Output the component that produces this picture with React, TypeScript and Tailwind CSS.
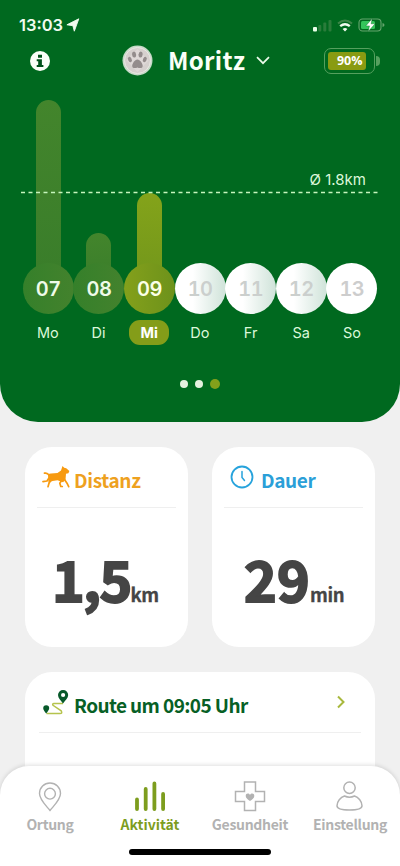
import React from "react";

const sans = "font-['Noto_Sans_CJK_SC','Noto_Sans',sans-serif]";

type Day = { num: string; name: string; bar: string; state: "past" | "today" | "next" | "last" };

const days: Day[] = [
  { num: "07", name: "Mo", bar: "h-[188px]", state: "past" },
  { num: "08", name: "Di", bar: "h-[55px]", state: "past" },
  { num: "09", name: "Mi", bar: "h-[95px]", state: "today" },
  { num: "10", name: "Do", bar: "h-0", state: "next" },
  { num: "11", name: "Fr", bar: "h-0", state: "next" },
  { num: "12", name: "Sa", bar: "h-0", state: "next" },
  { num: "13", name: "So", bar: "h-0", state: "last" },
];

const barTone = {
  past: "bg-linear-to-b from-[#43852c] to-[#397d2a]",
  today: "bg-linear-to-b from-[#84a31a] to-[#71961b]",
  next: "",
  last: "",
};

const circleTone = {
  past: "bg-linear-to-r from-[#35802a] to-[#43822d] text-[#effbe9]",
  today: "bg-linear-to-r from-[#84a01b] to-[#6d921b] text-[#fbffe6]",
  next: "bg-linear-to-r from-white from-35% to-[#cfe3d9] text-[#cbcfcd]",
  last: "bg-white text-[#cdcdcd]",
};

function StatusBar() {
  return (
    <div className="flex h-[45px] items-center pt-[5px] pl-[19px] pr-[14px] text-[#f1fbef]">
      <span className="text-[16.5px] font-semibold leading-5">13:03</span>
      <svg className="ml-[3px]" width="14" height="14" viewBox="0 0 14 14">
        <path d="M12.800.8.9 6.800l6 .9 1.400 5.500Z" fill="currentColor" stroke="currentColor" strokeWidth=".9" strokeLinejoin="round" />
      </svg>
      <svg className="ml-auto" width="20" height="14" viewBox="0 0 20 14">
        <rect x="0" y="9" width="4" height="4.500" rx="1" fill="#e9ffe9" />
        <rect x="5.300" y="7" width="3" height="6.500" rx="1" fill="#2a7c3b" />
        <rect x="10.300" y="4.500" width="3" height="9" rx="1" fill="#2a7c3b" />
        <rect x="15.500" y="2" width="3" height="11.500" rx="1" fill="#2a7c3b" />
      </svg>
      <svg className="ml-[4px]" width="16" height="13" viewBox="0 0 16 13" fill="none">
        <path d="M1 4.600Q8-1.700 15 4.600" stroke="#3d8649" strokeWidth="2" />
        <path d="M3.200 7.200q4.800-4 9.600 0" stroke="#f1fbef" strokeWidth="2.400" />
        <path d="m8 12.500-2.400-2.600q2.400-1.800 4.800 0Z" fill="#f1fbef" />
      </svg>
      <svg className="ml-[5px]" width="28" height="14" viewBox="0 0 28 14">
        <rect x="1" y="1" width="22" height="12" rx="3.500" fill="none" stroke="#65a56e" strokeWidth="1.100" />
        <rect x="3" y="3" width="14" height="8" rx="1.500" fill="#34c45b" />
        <path d="M24.500 5v4q2-.6 2-2t-2-2Z" fill="#65a56e" />
        <path d="M14.200.6 7.800 7.900h3.700L10.200 13.400l6.900-7.600h-4Z" fill="#fff" stroke="#00691f" strokeWidth=".4" />
      </svg>
    </div>
  );
}

function TitleBar() {
  return (
    <div className="flex h-[32px] items-center pl-[30px] pr-[20px]">
      <svg width="20" height="20" viewBox="0 0 20 20">
        <circle cx="10" cy="10" r="10" fill="#fbfff8" />
        <path d="M8 3.800h4v3H8ZM6.700 8.300h5.200v5.800h1.500v2H6.700v-2h1.500v-3.800H6.700Z" fill="#00511a" />
      </svg>
      <svg className="-mt-[2px] ml-[72px]" width="31" height="31" viewBox="0 0 31 31">
        <circle cx="15.500" cy="15.500" r="15" fill="#c6dac8" />
        <circle cx="15.500" cy="15.500" r="13" fill="#d6d0ce" stroke="#ece7e4" />
        <path d="m15.500 4 11 11.500-11 11.500-11-11.500Z" fill="#e4dddd" opacity=".6" />
        <g fill="#948c8c">
          <ellipse cx="12.100" cy="9.600" rx="2" ry="3" transform="rotate(-8 12.100 9.600)" />
          <ellipse cx="18.600" cy="9.600" rx="2" ry="3" transform="rotate(8 18.600 9.600)" />
          <ellipse cx="7.900" cy="14.500" rx="1.800" ry="2.700" transform="rotate(-25 7.900 14.500)" />
          <ellipse cx="22.800" cy="14.500" rx="1.800" ry="2.700" transform="rotate(25 22.800 14.500)" />
          <path d="M15.400 14.600c2.700 0 5.300 4.200 5.300 6.300 0 2.600-3.200 2.500-5.300 1.600-2 .9-5.200 1-5.200-1.600 0-2.100 2.500-6.300 5.200-6.300Z" />
        </g>
      </svg>
      <h1 className={`${sans} ml-[15px] -mt-[2px] w-[78px] whitespace-nowrap text-[24px] font-bold leading-8 tracking-[0.300px] text-[#fbfff8]`}>Moritz</h1>
      <svg className="-mt-[1px] ml-[10px]" width="14" height="10" viewBox="0 0 14 10" fill="none" stroke="#eafbe9" strokeWidth="1.700">
        <path d="m1 1.200 6 6 6-6" />
      </svg>
      <div className="ml-auto flex items-center">
        <div className="flex h-[26px] w-[51px] items-center rounded-[7px] border-[1.5px] border-[#55a05e] p-[3px]">
          <div className="flex h-[18px] w-[38px] items-center justify-end rounded-[3px] bg-[#899b12] pr-[3.5px] font-['Open_Sans'] text-[12.5px] font-bold leading-none text-white">90%</div>
        </div>
        <div className="ml-[1px] h-[10px] w-[4px] rounded-r-full bg-[#55a05e]" />
      </div>
    </div>
  );
}

function WeekChart() {
  return (
    <div className="relative mt-[23px] h-[250px] px-[22px]">
      <div className="flex h-[214px] items-end pl-[1px]">
        {days.map((d) => (
          <div key={d.num} className="flex w-[50.6px] flex-col items-center">
            <div className={`w-[25px] rounded-t-full ${d.bar} ${barTone[d.state]}`} />
            <div className={`${d.bar === "h-0" ? "" : "-mt-[25px]"} flex h-[51px] w-[51px] items-center justify-center rounded-full font-['Inter'] text-[20px] font-semibold tabular-nums tracking-[-0.5px] ${circleTone[d.state]}`}>{d.num}</div>
          </div>
        ))}
      </div>
      <div className="mt-[6px] flex pl-[0.5px]">
        {days.map((d) => (
          <div key={d.name} className="flex w-[50.7px] justify-center">
            <span className={`flex h-[25px] items-center rounded-[11px] text-[14.5px] ${d.state === "today" ? "w-[40px] justify-center bg-[#849d19] font-bold text-white" : "text-[#dcf8da]"}`}>{d.name}</span>
          </div>
        ))}
      </div>
      <svg className="absolute left-[21px] top-[91px]" width="357" height="3" viewBox="0 0 357 3">
        <path d="M0 1.500h357" stroke="#c5f5bd" strokeWidth="1.300" strokeDasharray="4 3.500" />
      </svg>
      <span className="absolute right-[34px] top-[70px] text-[15px] leading-5 text-[#dcf8da]">Ø 1.8km</span>
    </div>
  );
}

function DogIcon() {
  return (
    <svg width="28" height="23" viewBox="0 0 28 23" fill="none" stroke="#f79a10" strokeLinecap="round" strokeLinejoin="round">
      <path d="M6 9.800Q7 8.500 9 8.500L15.500 8 19 5.500 20.500 1l1.700 1.700 2 .5 3.200 2.800-1 2.200-2.400.6-.5 6-2.500 2.400-5.500-1.900-5 .7-4 1.800Z" fill="#f79a10" stroke="none" />
      <path d="M7 10.200Q5.500 7.500 2.500 8.200M6.800 13.200 5 16 1 16.700M9.500 14l-2.500 4.300-1 3.400M19.600 15.500l-1.800 2.700 1 3.300h1.500M22.500 14.500l2.500 3.700 1.700 3.500" strokeWidth="1.700" />
    </svg>
  );
}

function ClockIcon() {
  return (
    <svg width="24" height="24" viewBox="0 0 24 24" fill="none" stroke="#27a3dc" strokeLinecap="round">
      <circle cx="12" cy="12" r="10.500" strokeWidth="1.800" />
      <path d="M12 6.500v6l2.500 3" strokeWidth="1.500" />
    </svg>
  );
}

function StatCard(p: { icon: React.ReactNode; iconPad: string; title: string; tone: string; value: string; unit: string; valuePad: string; valueTrack: string }) {
  return (
    <section className="h-[200px] w-[163px] rounded-[27px] bg-white px-[12px]">
      <div className={`flex h-[61px] border-b border-[#efefef] ${p.iconPad}`}>
        <div className="pt-[18px]">{p.icon}</div>
        <h2 className={`${sans} pt-[19px] text-[19px] font-bold leading-7 tracking-[-0.35px] ${p.tone}`}>{p.title}</h2>
      </div>
      <div className={`${sans} flex items-baseline whitespace-nowrap pt-[33px] font-bold leading-[74px] text-[#454545] ${p.valuePad}`}>
        <span className={`text-[55.5px] [-webkit-text-stroke:2px_#454545] ${p.valueTrack}`}>{p.value}</span>
        <span className="text-[18.5px] tracking-[-0.3px] [-webkit-text-stroke:0.3px_#454545]">{p.unit}</span>
      </div>
    </section>
  );
}

function RouteCard() {
  return (
    <section className="mt-[25px] h-[194px] rounded-[27px] bg-white px-[14px]">
      <div className="flex h-[61px] border-b border-[#efefef] pl-[3px]">
        <svg className="mt-[17px]" width="28" height="27" viewBox="0 0 28 27">
          <path d="M21 14.500h-9q-2 .3-1 1.800l8.200 5.500q1.500 2.700-1.200 2.700H4.500" fill="none" stroke="#b5c34c" strokeWidth="1.500" />
          <path d="M21 14.500c-2.200-3-5-5.500-5-8.500a5 5 0 0 1 10.200 0c0 3-3 5.500-5.200 8.500Z" fill="#07592a" />
          <circle cx="21.100" cy="6" r="2.100" fill="#fff" />
          <path d="M4.200 24.500c-1.400-2-3-3.500-3-5.300a3 3 0 0 1 6 0c0 1.800-1.700 3.300-3 5.300Z" fill="#07592a" />
        </svg>
        <h2 className={`${sans} ml-[4px] pt-[19px] text-[19px] font-bold leading-7 tracking-[-0.6px] text-[#076025]`}>Route um 09:05 Uhr</h2>
        <svg className="ml-auto mr-[15px] mt-[23px]" width="10" height="14" viewBox="0 0 10 14" fill="none" stroke="#a8b83d" strokeWidth="2">
          <path d="m2 1.500 5.500 5.500L2 12.500" />
        </svg>
      </div>
    </section>
  );
}

function NavItem({ label, icon, active = false }: { label: string; icon: React.ReactNode; active?: boolean }) {
  return (
    <div className={`flex w-[100px] flex-col items-center pt-[15px] ${active ? "text-[#7d9d1e]" : "text-[#b2b2b2]"}`}>
      {icon}
      <span className={`${sans} whitespace-nowrap text-[14px] font-bold leading-5 ${active ? "" : "tracking-[-0.3px]"}`}>{label}</span>
    </div>
  );
}

function BottomNav() {
  return (
    <nav className="absolute inset-x-0 bottom-0 h-[100px] rounded-t-[29px] bg-white shadow-[0_-1px_4px_rgba(0,0,0,0.13)]">
      <div className="flex">
        <NavItem label="Ortung" icon={
          <svg width="32" height="33" viewBox="0 0 32 33" fill="none" stroke="currentColor" strokeWidth="1.400">
            <path d="M16 29.500C11.500 24 5.500 18.500 5.500 12.500a10.500 10.500 0 0 1 21 0c0 6-6 11.500-10.500 17Z" />
            <circle cx="16" cy="12.700" r="5.400" />
          </svg>
        } />
        <NavItem active label="Aktivität" icon={
          <svg width="32" height="33" viewBox="0 0 32 33" fill="none" stroke="currentColor" strokeWidth="3.800" strokeLinecap="round">
            <path d="M3 18.500V28M11.700 8V28M20.400 2.500V28M29.100 13V28" />
          </svg>
        } />
        <NavItem label="Gesundheit" icon={
          <svg width="32" height="33" viewBox="0 0 32 33" fill="none" stroke="currentColor" strokeWidth="1.500">
            <path d="M10.500 1h11v9.500h9v10h-9v9h-11v-9h-9v-10h9Z" />
            <path d="M16 20c-2-1.600-4.300-3-4.300-5.100 0-2.700 3.200-3 4.300-.9 1.100-2.100 4.300-1.800 4.300.9 0 2.100-2.300 3.500-4.300 5.100Z" fill="currentColor" stroke="none" />
          </svg>
        } />
        <NavItem label="Einstellung" icon={
          <svg width="32" height="33" viewBox="0 0 32 33" fill="none" stroke="currentColor" strokeWidth="1.500">
            <circle cx="15.500" cy="6.800" r="5.700" />
            <path d="M10.500 15q5 2.500 10 0c4 1.200 7.500 5.500 7.500 9.700 0 3-4 4.300-12.500 4.300S3 27.700 3 24.700C3 20.500 6.500 16.200 10.500 15Z" />
          </svg>
        } />
      </div>
      <div className="mx-auto mt-[15px] h-[6px] w-[142px] rounded-full bg-black" />
    </nav>
  );
}

export default function App() {
  return (
    <main className="relative h-[866px] w-[400px] overflow-hidden bg-[#f0f0f0] font-['Inter',sans-serif]">
      <header className="h-[422px] rounded-b-[38px] bg-[#00691f]">
        <StatusBar />
        <TitleBar />
        <WeekChart />
        <div className="mt-[29px] flex items-center justify-center gap-[7px] pr-[1px]">
          <span className="h-[8px] w-[8px] rounded-full bg-[#e4f1df]" />
          <span className="h-[8px] w-[8px] rounded-full bg-[#e4f1df]" />
          <span className="h-[10px] w-[10px] rounded-full bg-[#84a01b]" />
        </div>
      </header>
      <div className="px-[25px] pt-[25px]">
        <div className="flex justify-between">
          <StatCard icon={<DogIcon />} iconPad="pl-[5px] gap-[4px]" title="Distanz" tone="text-[#eea11f]" value="1,5" unit="km" valuePad="pl-[15px]" valueTrack="tracking-[-1.7px]" />
          <StatCard icon={<ClockIcon />} iconPad="pl-[6px] gap-[7px]" title="Dauer" tone="text-[#2b9fd8]" value="29" unit="min" valuePad="pl-[20px]" valueTrack="tracking-[0.2px]" />
        </div>
        <RouteCard />
      </div>
      <BottomNav />
    </main>
  );
}
